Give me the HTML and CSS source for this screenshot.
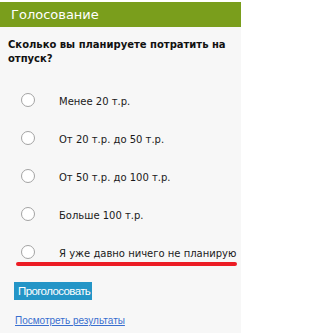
FILE: index.html
```html
<!DOCTYPE html>
<html lang="ru">
<head>
<meta charset="utf-8">
<title>Голосование</title>
<link rel="stylesheet" href="styles.css">
</head>
<body>
<div class="poll">
  <div class="poll-head">Голосование</div>
  <div class="poll-body">
    <div class="question">Сколько вы планируете потратить на отпуск?</div>
    <div class="options">
      <label class="option"><input type="radio" name="v" class="radio"><span>Менее 20 т.р.</span></label>
      <label class="option"><input type="radio" name="v" class="radio"><span>От 20 т.р. до 50 т.р.</span></label>
      <label class="option"><input type="radio" name="v" class="radio"><span>От 50 т.р. до 100 т.р.</span></label>
      <label class="option"><input type="radio" name="v" class="radio"><span>Больше 100 т.р.</span></label>
      <label class="option"><input type="radio" name="v" class="radio"><span>Я уже давно ничего не планирую</span></label>
    </div>
    <div class="mark"></div>
    <button class="vote">Проголосовать</button>
    <a class="results" href="#">Посмотреть результаты</a>
  </div>
</div>
</body>
</html>
```
FILE: styles.css
```css
html, body {
  margin: 0;
  padding: 0;
  background: #ffffff;
}
.poll {
  width: 241px;
  margin-top: 2px;
  background: #f7f7f7;
  height: 331px;
}
.poll-head {
  height: 25px;
  line-height: 25px;
  background: #7a9e1c;
  color: #ffffff;
  font-family: "DejaVu Sans", sans-serif;
  font-size: 13px;
  padding-left: 11px;
}
.poll-body {
  padding: 11px 0 0 8px;
  display: flex;
  flex-direction: column;
  align-items: flex-start;
}
.question {
  font-family: "DejaVu Sans", sans-serif;
  font-weight: bold;
  font-size: 10px;
  line-height: 14px;
  color: #111111;
  width: 225px;
}
.options {
  display: flex;
  flex-direction: column;
  gap: 18px;
  margin-top: 24px;
}
.option {
  display: flex;
  align-items: center;
  height: 20px;
  font-family: "DejaVu Sans", sans-serif;
  font-size: 10px;
  color: #1a1a1a;
}
.option span {
  position: relative;
  top: 1px;
}
.radio {
  appearance: none;
  -webkit-appearance: none;
  width: 14px;
  height: 14px;
  margin: 0 24px 0 13px;
  border: 1.5px solid #a3a3a3;
  border-radius: 50%;
  background: #ffffff;
  box-sizing: border-box;
}
.mark {
  width: 221px;
  height: 4px;
  margin: 0 0 0 8px;
  background: #ec1c24;
  border-radius: 2px;
}
.vote {
  margin: 16px 0 0 6px;
  height: 18px;
  padding: 0 2px 0 4px;
  border: none;
  background: #2495c7;
  color: #ffffff;
  font-family: "Liberation Sans", sans-serif;
  font-size: 11.5px;
  letter-spacing: -0.6px;
  line-height: 18px;
}
.results {
  margin: 15px 0 0 7px;
  font-family: "Liberation Sans", sans-serif;
  font-size: 10px;
  color: #3a6fcf;
  text-decoration: underline;
}
```
